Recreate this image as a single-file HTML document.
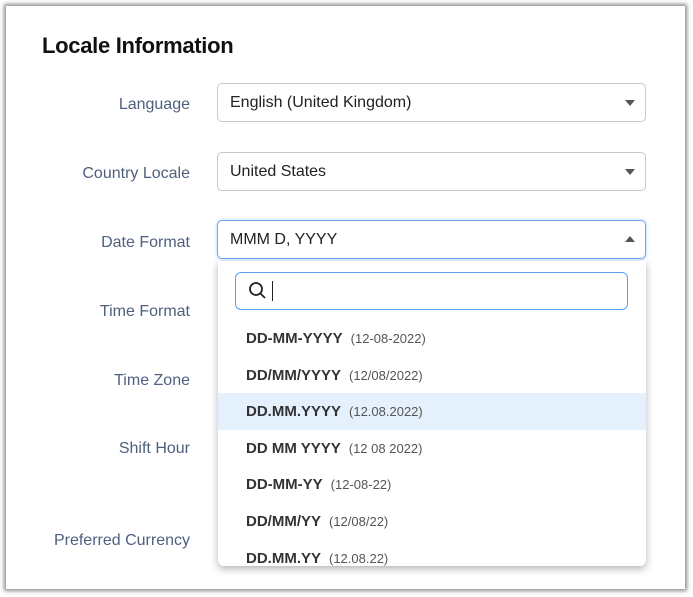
<!DOCTYPE html>
<html><head><style>
html,body{margin:0;padding:0;width:693px;height:597px;background:#fff;overflow:hidden;font-family:"Liberation Sans",sans-serif}
.card{position:absolute;left:6px;top:6px;width:679px;height:583px;background:#fff;box-shadow:0 0 4px 2px rgba(0,0,0,.45)}
h1{position:absolute;left:36px;top:27px;margin:0;font-size:22px;font-weight:bold;color:#111;letter-spacing:-0.3px}
.lbl{position:absolute;right:495px;font-size:16px;color:#4f5f7e;white-space:nowrap}
.inp{position:absolute;left:211px;width:429px;height:39px;border:1px solid #c8c8c8;border-radius:5px;font-size:16px;color:#222;box-sizing:border-box;padding:10px 12px}
.arr{position:absolute;right:10px;top:16px;width:0;height:0;border-left:5px solid transparent;border-right:5px solid transparent;border-top:6px solid #555}
.up{border-top:none;border-bottom:6px solid #555;top:15px}
.dd{position:absolute;left:212px;top:255px;width:428px;height:305px;background:#fff;border-radius:0 0 6px 6px;box-shadow:0 3px 8px rgba(0,0,0,.3);overflow:hidden}
.search{position:absolute;left:17px;top:11px;width:393px;height:38px;border:1.5px solid #5a9ff0;border-radius:6px;box-sizing:border-box}
.it{position:absolute;left:0;width:428px;height:37px;line-height:37px;padding-left:28px;box-sizing:border-box;font-size:15px;font-weight:bold;color:#333}
.it span{font-weight:normal;font-size:13px;color:#555;margin-left:8px}
.hl{background:#e4f0fc}
</style></head><body>
<div class="card">
<h1>Locale Information</h1>
<div class="lbl" style="top:90px">Language</div>
<div class="lbl" style="top:159px">Country Locale</div>
<div class="lbl" style="top:228px">Date Format</div>
<div class="lbl" style="top:297px">Time Format</div>
<div class="lbl" style="top:366px">Time Zone</div>
<div class="lbl" style="top:434px">Shift Hour</div>
<div class="lbl" style="top:526px">Preferred Currency</div>
<div class="inp" style="top:77px">English (United Kingdom)<div class="arr"></div></div>
<div class="inp" style="top:146px">United States<div class="arr"></div></div>
<div class="inp" style="top:214px;border:1.5px solid #6aa8f2;box-shadow:0 0 3px rgba(90,160,240,.5)">MMM D, YYYY<div class="arr up"></div></div>
<div class="dd">
<div class="search"><svg width="20" height="20" style="position:absolute;left:12px;top:8px" viewBox="0 0 20 20"><circle cx="8" cy="8" r="6" fill="none" stroke="#222" stroke-width="1.8"/><path d="M12.5 12.5L17 17" stroke="#222" stroke-width="1.8"/></svg><div style="position:absolute;left:36px;top:8px;width:1px;height:20px;background:#222"></div></div>
<div class="it" style="top:59px">DD-MM-YYYY<span>(12-08-2022)</span></div>
<div class="it" style="top:96px">DD/MM/YYYY<span>(12/08/2022)</span></div>
<div class="it hl" style="top:132px">DD.MM.YYYY<span>(12.08.2022)</span></div>
<div class="it" style="top:169px">DD MM YYYY<span>(12 08 2022)</span></div>
<div class="it" style="top:205px">DD-MM-YY<span>(12-08-22)</span></div>
<div class="it" style="top:242px">DD/MM/YY<span>(12/08/22)</span></div>
<div class="it" style="top:279px">DD.MM.YY<span>(12.08.22)</span></div>
</div>
</div>
</body></html>
